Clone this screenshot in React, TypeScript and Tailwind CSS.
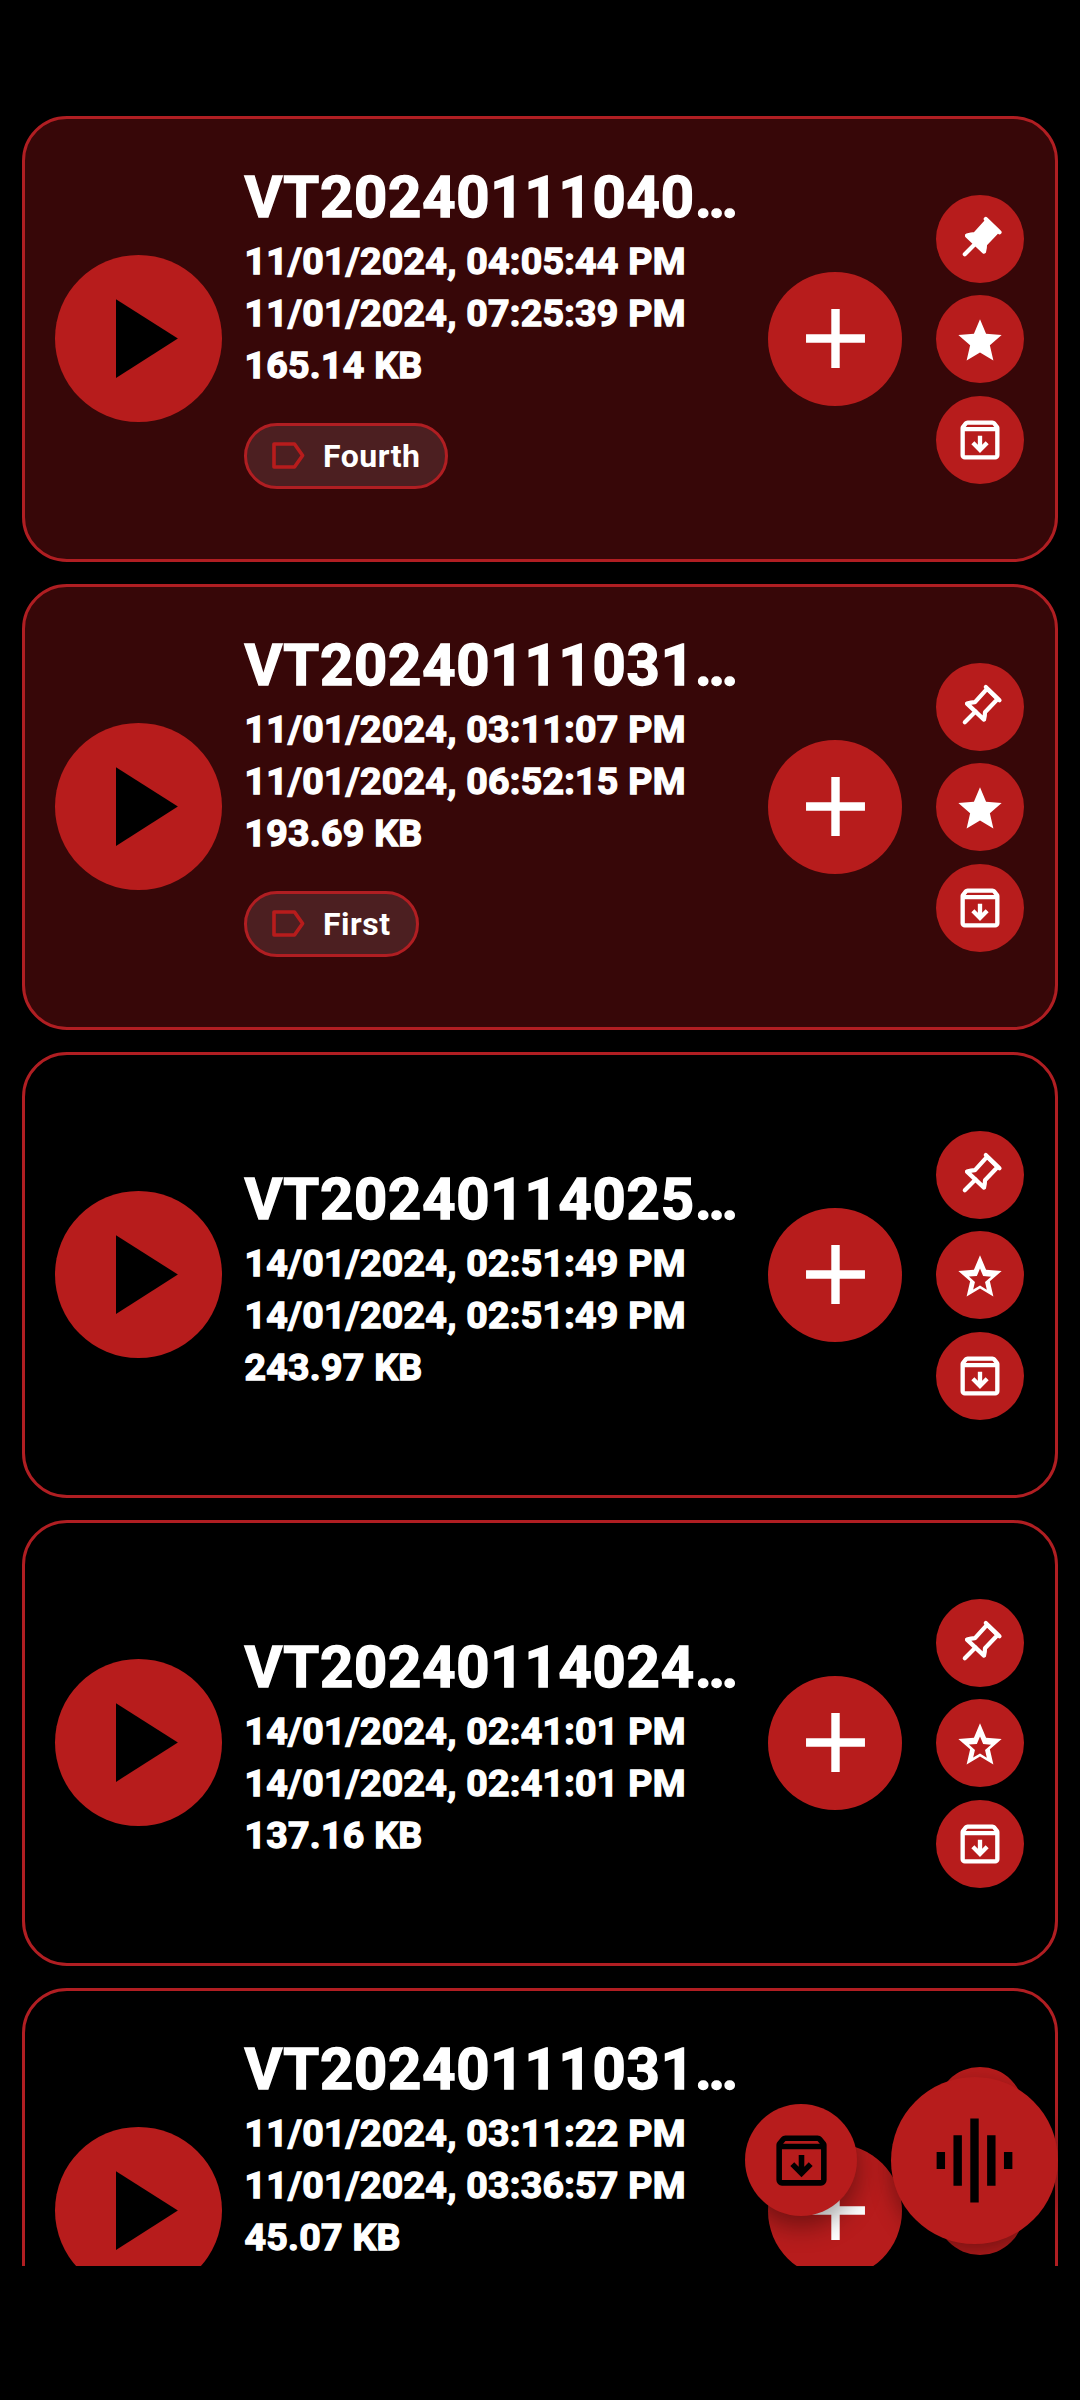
import type { ReactNode } from "react";

type Recording = {
  name: string;
  created: string;
  modified: string;
  size: string;
  tag?: string;
  pinned?: boolean;
  starred?: boolean;
  highlighted?: boolean;
  alignTop?: boolean;
};

const recordings: Recording[] = [
  {
    name: "VT20240111040…",
    created: "11/01/2024, 04:05:44 PM",
    modified: "11/01/2024, 07:25:39 PM",
    size: "165.14 KB",
    tag: "Fourth",
    pinned: true,
    starred: true,
    highlighted: true,
  },
  {
    name: "VT20240111031…",
    created: "11/01/2024, 03:11:07 PM",
    modified: "11/01/2024, 06:52:15 PM",
    size: "193.69 KB",
    tag: "First",
    starred: true,
    highlighted: true,
  },
  {
    name: "VT20240114025…",
    created: "14/01/2024, 02:51:49 PM",
    modified: "14/01/2024, 02:51:49 PM",
    size: "243.97 KB",
  },
  {
    name: "VT20240114024…",
    created: "14/01/2024, 02:41:01 PM",
    modified: "14/01/2024, 02:41:01 PM",
    size: "137.16 KB",
  },
  {
    name: "VT20240111031…",
    created: "11/01/2024, 03:11:22 PM",
    modified: "11/01/2024, 03:36:57 PM",
    size: "45.07 KB",
    alignTop: true,
  },
];

const PlayIcon = () => (
  <svg viewBox="0 0 24 24" fill="currentColor" className="size-[135px] shrink-0">
    <path d="M8 5v14l11-7z" />
  </svg>
);

const PlusIcon = () => (
  <svg viewBox="0 0 24 24" fill="currentColor" className="size-[101px] shrink-0">
    <path d="M19 13h-6v6h-2v-6H5v-2h6V5h2v6h6v2z" />
  </svg>
);

const PinIcon = ({ filled }: { filled?: boolean }) => (
  <svg
    viewBox="0 0 52 52"
    fill="none"
    stroke="currentColor"
    strokeWidth="4.2"
    strokeLinecap="round"
    strokeLinejoin="round"
    className="size-[52px]"
  >
    <path
      d="M33 7.8L21 21.2Q17 21.4 13 22.6L30 38.6Q31 35 31 31.2L43.6 18z"
      fill={filled ? "currentColor" : "none"}
    />
    <path d="M31.8 6L45.5 19.2M21.5 30.6L10.8 41.2" />
  </svg>
);

const StarIcon = ({ filled }: { filled?: boolean }) => (
  <svg viewBox="0 -960 960 960" fill="currentColor" className="mt-[3px] size-[52px]">
    {filled ? (
      <path d="m233-120 65-281L80-590l288-25 112-265 112 265 288 25-218 189 65 281-247-149-247 149Z" />
    ) : (
      <path d="m354-247 126-76 126 77-33-144 111-96-146-13-58-136-58 135-146 13 111 97-33 143ZM233-120l65-281L80-590l288-25 112-265 112 265 288 25-218 189 65 281-247-149-247 149Z" />
    )}
  </svg>
);

const ArchiveIcon = ({ className }: { className: string }) => (
  <svg viewBox="0 -960 960 960" fill="currentColor" className={className}>
    <path d="m480-240 160-160-56-56-64 64v-168h-80v168l-64-64-56 56 160 160ZM200-640v440h560v-440H200Zm0 520q-33 0-56.5-23.5T120-200v-499q0-14 4.5-27t13.5-24l50-61q11-14 27.5-21.5T250-840h460q18 0 34.5 7.5T772-811l50 61q9 11 13.5 24t4.5 27v499q0 33-23.5 56.5T760-120H200Zm16-600h528l-34-40H250l-34 40Z" />
  </svg>
);

const LabelIcon = () => (
  <svg viewBox="0 0 33 27" fill="none" stroke="currentColor" strokeWidth="3.6" strokeLinejoin="round" className="h-[27px] w-[33px]">
    <path d="M2 2h20.5L30.6 13.5 22.5 25H2z" />
  </svg>
);

const EqualizerIcon = () => (
  <svg viewBox="0 0 24 24" fill="currentColor" className="size-[101px]">
    <path d="M7 18h2V6H7v12zm4 4h2V2h-2v20zm-8-8h2v-4H3v4zm12 4h2V6h-2v12zm4-8v4h2v-4h-2z" />
  </svg>
);

const SmallButton = ({ label, children }: { label: string; children: ReactNode }) => (
  <button aria-label={label} className="flex size-[88px] items-center justify-center rounded-full bg-[#b71c1c] text-white">
    {children}
  </button>
);

const Tag = ({ text }: { text: string }) => (
  <div className="mt-[32px] mb-[34px] flex h-[66px] w-fit items-center gap-[18px] rounded-full border-3 border-[#b01e22] bg-[#4c1f21] pr-[25px] pl-[25px] text-[#b71c1c]">
    <LabelIcon />
    <span className="text-[32px] font-bold tracking-[0.5px] text-white">{text}</span>
  </div>
);

const RecordingCard = ({ item }: { item: Recording }) => {
  return (
    <div
      className={`flex h-[446px] shrink-0 items-center rounded-[45px] border-3 border-[#b01e22] pr-[31px] pb-px pl-[30px] ${
        item.highlighted ? "bg-[#370708]" : "bg-black"
      }`}
    >
      <button aria-label="Play" className="flex size-[167px] shrink-0 items-center justify-center rounded-full bg-[#b71c1c] text-black">
        <PlayIcon />
      </button>
      <div className={`ml-[22px] w-[502px] whitespace-nowrap text-white ${item.alignTop ? "pb-[132px]" : ""}`}>
        <h2 className="pt-1 pl-[0.5px] text-[58px] leading-[76px] font-bold tracking-[0.8px] [-webkit-text-stroke:1.4px_white]">{item.name}</h2>
        <div className="pl-[0.5px] text-[37.5px] leading-[52px] font-bold tracking-[0.27px] [-webkit-text-stroke:1.3px_white]">
          <p>{item.created}</p>
          <p>{item.modified}</p>
          <p>{item.size}</p>
        </div>
        {item.tag && <Tag text={item.tag} />}
      </div>
      <button aria-label="Add" className="ml-[22px] flex size-[134px] shrink-0 items-center justify-center rounded-full bg-[#b71c1c] text-white">
        <PlusIcon />
      </button>
      <div className="ml-[34px] flex flex-col gap-[12.5px] pt-px">
        <SmallButton label="Pin">
          <PinIcon filled={item.pinned} />
        </SmallButton>
        <SmallButton label="Star">
          <StarIcon filled={item.starred} />
        </SmallButton>
        <SmallButton label="Archive">
          <ArchiveIcon className="size-[52px]" />
        </SmallButton>
      </div>
    </div>
  );
};

export default function App() {
  return (
    <div className="h-[2400px] w-[1080px] overflow-hidden bg-black font-['Roboto',sans-serif]">
      <div className="relative h-[2266px] overflow-hidden">
        <div className="flex flex-col gap-[22px] px-[22px] pt-[116px]">
          {recordings.map((item, i) => (
            <RecordingCard key={i} item={item} />
          ))}
        </div>
        <div className="absolute right-[22px] bottom-[22px] flex items-center gap-[34px] text-black">
          <button aria-label="Archived" className="mb-px flex size-[112px] items-center justify-center rounded-full bg-[#b71c1c] shadow-[0_10px_26px_rgba(0,0,0,0.4)]">
            <ArchiveIcon className="size-[67px]" />
          </button>
          <button aria-label="Record" className="flex size-[167px] items-center justify-center rounded-full bg-[#b71c1c] shadow-[0_8px_22px_rgba(0,0,0,0.35)]">
            <EqualizerIcon />
          </button>
        </div>
      </div>
    </div>
  );
}
